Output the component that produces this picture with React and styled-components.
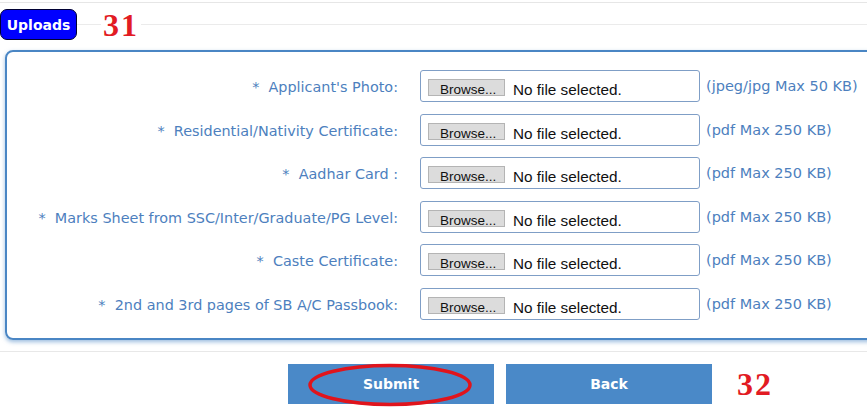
import React from "react";
import styled, { createGlobalStyle } from "styled-components";

const GlobalStyle = createGlobalStyle`
  html, body {
    margin: 0;
    padding: 0;
    background: #ffffff;
    overflow: hidden;
  }
  body {
    font-family: "DejaVu Sans", Verdana, sans-serif;
  }
`;

const Page = styled.div`
  width: 867px;
  height: 410px;
  position: relative;
  border-top: 1px solid transparent;
  box-sizing: border-box;
`;

const TopRule = styled.div`
  height: 1px;
  margin-top: 1px;
  background: #e6e6e6;
`;

const Header = styled.div`
  height: 47px;
  display: flex;
  align-items: flex-start;
  background: linear-gradient(#ebebeb, #ebebeb) no-repeat 0 21px / 100% 1px;
`;

const Legend = styled.div`
  margin-top: 6px;
  height: 31px;
  width: 77px;
  box-sizing: border-box;
  display: flex;
  align-items: center;
  justify-content: center;
  background: #0000ff;
  border: 1px solid #000033;
  border-radius: 7px;
  color: #ffffff;
  font-weight: bold;
  font-size: 14px;
`;

const Callout = styled.span`
  font-family: "Liberation Serif", "Times New Roman", serif;
  font-weight: bold;
  font-size: 32px;
  color: #e21b23;
  line-height: 1;
  letter-spacing: 2px;
  margin: ${(p) => p.$margin};
  background: #fff;
  padding: 0 2px;
`;

const Panel = styled.div`
  margin-left: 5px;
  width: 880px;
  box-sizing: border-box;
  border: 2px solid #4a86c4;
  border-radius: 8px;
  box-shadow: 0 2px 4px rgba(74, 134, 196, 0.55);
  padding: 18px 0 18px 0;
  display: flex;
  flex-direction: column;
  gap: 11.6px;
`;

const Row = styled.div`
  display: grid;
  grid-template-columns: 391px 280px auto;
  column-gap: 22px;
  align-items: center;
  height: 32px;

  & > :last-child {
    margin-left: -16px;
  }
`;

const Label = styled.div`
  text-align: right;
  font-size: 14.4px;
  color: #4d7fbe;
  white-space: pre;
  margin-top: 2px;
`;

const FileBox = styled.div`
  height: 32px;
  box-sizing: border-box;
  border: 1px solid #7f9ec6;
  border-radius: 3px;
  background: #fff;
  display: flex;
  align-items: flex-start;
  padding: 8px 0 0 7px;
  font-family: "Liberation Sans", Arial, sans-serif;
  color: #111;
`;

const Browse = styled.span`
  width: 77px;
  height: 17px;
  box-sizing: border-box;
  background: #dcdcdc;
  border: 1px solid #b4b4b4;
  font-size: 13.5px;
  line-height: 1;
  padding: 3px 0 0 11px;
  white-space: nowrap;
  overflow: visible;
`;

const Status = styled.span`
  margin-left: 8px;
  margin-top: 3px;
  font-size: 15.3px;
  line-height: 1;
`;

const Note = styled.div`
  font-size: 14.5px;
  color: #4d7fbe;
  white-space: nowrap;
`;

const Divider = styled.div`
  margin-top: 11px;
  height: 1px;
  background: #e8e8e8;
`;

const Actions = styled.div`
  display: flex;
  align-items: center;
  padding: 12px 0 0 288px;
  gap: 12px;
`;

const Button = styled.div`
  position: relative;
  width: 206px;
  height: 40px;
  background: #4a89c8;
  color: #ffffff;
  font-weight: bold;
  font-size: 14px;
  display: flex;
  align-items: center;
  justify-content: center;
`;

const Ring = styled.svg`
  position: absolute;
  left: 19px;
  top: -1px;
  width: 166px;
  height: 44px;
  overflow: visible;
`;

const rows = [
  ["Applicant's Photo:", "(jpeg/jpg Max 50 KB)"],
  ["Residential/Nativity Certificate:", "(pdf Max 250 KB)"],
  ["Aadhar Card :", "(pdf Max 250 KB)"],
  ["Marks Sheet from SSC/Inter/Graduate/PG Level:", "(pdf Max 250 KB)"],
  ["Caste Certificate:", "(pdf Max 250 KB)"],
  ["2nd and 3rd pages of SB A/C Passbook:", "(pdf Max 250 KB)"],
];

export default function App() {
  return (
    <Page>
      <GlobalStyle />
      <TopRule />
      <Header>
        <Legend>Uploads</Legend>
        <Callout $margin="6px 0 0 24px">31</Callout>
      </Header>
      <Panel>
        {rows.map(([label, note]) => (
          <Row key={label}>
            <Label>{"*  " + label}</Label>
            <FileBox>
              <Browse>Browse...</Browse>
              <Status>No file selected.</Status>
            </FileBox>
            <Note>{note}</Note>
          </Row>
        ))}
      </Panel>
      <Divider />
      <Actions>
        <Button>
          Submit
          <Ring viewBox="0 0 166 44">
            <ellipse cx="83" cy="22" rx="80" ry="19.5" fill="none" stroke="#e0141c" strokeWidth="3.5" />
          </Ring>
        </Button>
        <Button>Back</Button>
        <Callout $margin="0 0 0 11px">32</Callout>
      </Actions>
    </Page>
  );
}
